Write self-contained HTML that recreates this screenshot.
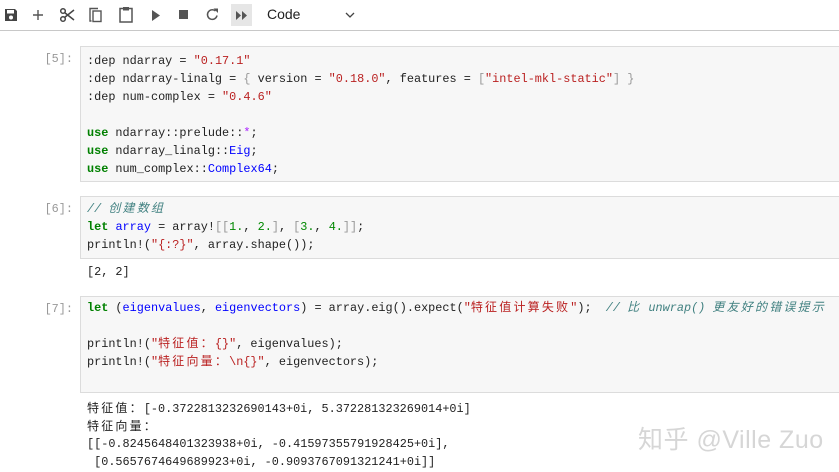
<!DOCTYPE html>
<html><head><meta charset="utf-8">
<style>
*{margin:0;padding:0;box-sizing:border-box}
body{width:839px;height:472px;background:#fff;overflow:hidden;position:relative;font-family:"Liberation Sans",sans-serif}
.tb{position:absolute;left:0;top:0;width:839px;height:31px;border-bottom:1px solid #c8c8c8;background:#fff}
.tb svg{position:absolute}
.sel{position:absolute;left:267px;top:6px;font-size:14px;color:#222}
.prompt{position:absolute;right:766px;font-family:"Liberation Mono",monospace;font-size:11.85px;color:#999;text-align:right;width:60px}
.cell{position:absolute;left:80px;width:759px;background:#f7f7f7;border:1px solid #dcdcdc;border-right:none}
pre{font-family:"Liberation Mono","Noto Sans CJK SC",monospace;font-size:11.85px;line-height:18px;color:#222;white-space:pre}
.cell pre{position:absolute;left:6px;top:5px}
.out{position:absolute;left:87px}
.k{color:#008000;font-weight:bold}
.v{color:#0000ff}
.s{color:#ba2121}
.c{color:#408080;font-style:italic}
.p{color:#aa22ff}
.b{color:#999}
.n{color:#080}
.z{font-family:"Noto Sans CJK SC",sans-serif;font-size:12px;letter-spacing:2.2px;line-height:1;vertical-align:baseline}
.wm{position:absolute;left:638px;top:420px;font-size:25px;color:#d6d6d6;font-family:"Liberation Sans","Noto Sans CJK SC",sans-serif;letter-spacing:0.5px}
</style></head><body>
<div class="tb">
<svg style="left:4px;top:8px" width="14" height="14" viewBox="0 0 14 14"><path d="M1 1h10l2 2v10H1z" fill="#444"/><rect x="3" y="2" width="7" height="3.5" fill="#fff"/><circle cx="7" cy="9.5" r="2" fill="#fff"/></svg>
<svg style="left:32px;top:9px" width="12" height="12"><path d="M6 1v10M1 6h10" stroke="#555" stroke-width="1.4"/></svg>
<svg style="left:59px;top:7px" width="16" height="16" viewBox="0 0 16 16"><circle cx="4" cy="4" r="2.3" fill="none" stroke="#444" stroke-width="1.5"/><circle cx="4" cy="12" r="2.3" fill="none" stroke="#444" stroke-width="1.5"/><path d="M5.5 5.5L15 13M5.5 10.5L15 3" stroke="#444" stroke-width="1.5"/></svg>
<svg style="left:89px;top:7px" width="14" height="16" viewBox="0 0 14 16"><path d="M1 3v11h1.5" fill="none" stroke="#555" stroke-width="1.4"/><rect x="4" y="4" width="8" height="10.5" fill="none" stroke="#555" stroke-width="1.4"/><path d="M1 3V1.5h8" fill="none" stroke="#555" stroke-width="1.4"/></svg>
<svg style="left:119px;top:6px" width="14" height="17" viewBox="0 0 14 17"><rect x="1" y="2.5" width="12" height="13.5" fill="none" stroke="#555" stroke-width="1.5"/><rect x="4" y="1" width="6" height="3.5" fill="#555"/></svg>
<svg style="left:151px;top:10px" width="10" height="11"><path d="M1 0l8 5.5L1 11z" fill="#555"/></svg>
<svg style="left:179px;top:10px" width="10" height="10"><rect width="9" height="9" fill="#555"/></svg>
<svg style="left:205px;top:7px" width="15" height="15" viewBox="0 0 15 15"><path d="M12 8.5A4.8 4.8 0 1 1 10.5 4" fill="none" stroke="#555" stroke-width="1.5"/><path d="M8.5 1.5h4.5v4.5z" fill="#555"/></svg>
<div style="position:absolute;left:231px;top:4px;width:21px;height:22px;background:#e6e6e6"></div>
<svg style="left:236px;top:11px" width="12" height="9"><path d="M0 0l5 4.5L0 9zM6 0l5 4.5L6 9z" fill="#555"/></svg>
<div class="sel">Code</div>
<svg style="left:345px;top:12px" width="10" height="7"><path d="M1 1l4 4 4-4" fill="none" stroke="#444" stroke-width="1.3"/></svg>
</div>

<div class="prompt" style="top:52px">[5]:</div>
<div class="cell" style="top:46px;height:136px"><pre><span>:dep ndarray = <span class="s">"0.17.1"</span>
:dep ndarray-linalg = <span class="b">{</span> version = <span class="s">"0.18.0"</span>, features = <span class="b">[</span><span class="s">"intel-mkl-static"</span><span class="b">]</span> <span class="b">}</span>
:dep num-complex = <span class="s">"0.4.6"</span>

<span class="k">use</span> ndarray::prelude::<span class="p">*</span>;
<span class="k">use</span> ndarray_linalg::<span class="v">Eig</span>;
<span class="k">use</span> num_complex::<span class="v">Complex64</span>;</span></pre></div>

<div class="prompt" style="top:202px">[6]:</div>
<div class="cell" style="top:196px;height:63px"><pre style="top:3px"><span class="c">// <span class="z">创建数组</span></span>
<span class="k">let</span> <span class="v">array</span> = array!<span class="b">[[</span><span class="n">1.</span>, <span class="n">2.</span><span class="b">]</span>, <span class="b">[</span><span class="n">3.</span>, <span class="n">4.</span><span class="b">]]</span>;
println!(<span class="s">"{:?}"</span>, array.shape());</pre></div>
<pre class="out" style="top:263px">[2, 2]</pre>

<div class="prompt" style="top:302px">[7]:</div>
<div class="cell" style="top:296px;height:97px"><pre style="top:2px"><span class="k">let</span> (<span class="v">eigenvalues</span>, <span class="v">eigenvectors</span>) = array.eig().expect(<span class="s">"<span class="z">特征值计算失败</span>"</span>);  <span class="c">// <span class="z">比</span> unwrap() <span class="z">更友好的错误提示</span></span>

println!(<span class="s">"<span class="z">特征值：</span>{}"</span>, eigenvalues);
println!(<span class="s">"<span class="z">特征向量：</span>\n{}"</span>, eigenvectors);</pre></div>
<pre class="out" style="top:401px;line-height:17.5px"><span class="z">特征值：</span>[-0.3722813232690143+0i, 5.372281323269014+0i]
<span class="z">特征向量：</span>
[[-0.8245648401323938+0i, -0.41597355791928425+0i],
 [0.5657674649689923+0i, -0.9093767091321241+0i]]</pre>
<div class="wm">知乎 @Ville Zuo</div>
</body></html>
